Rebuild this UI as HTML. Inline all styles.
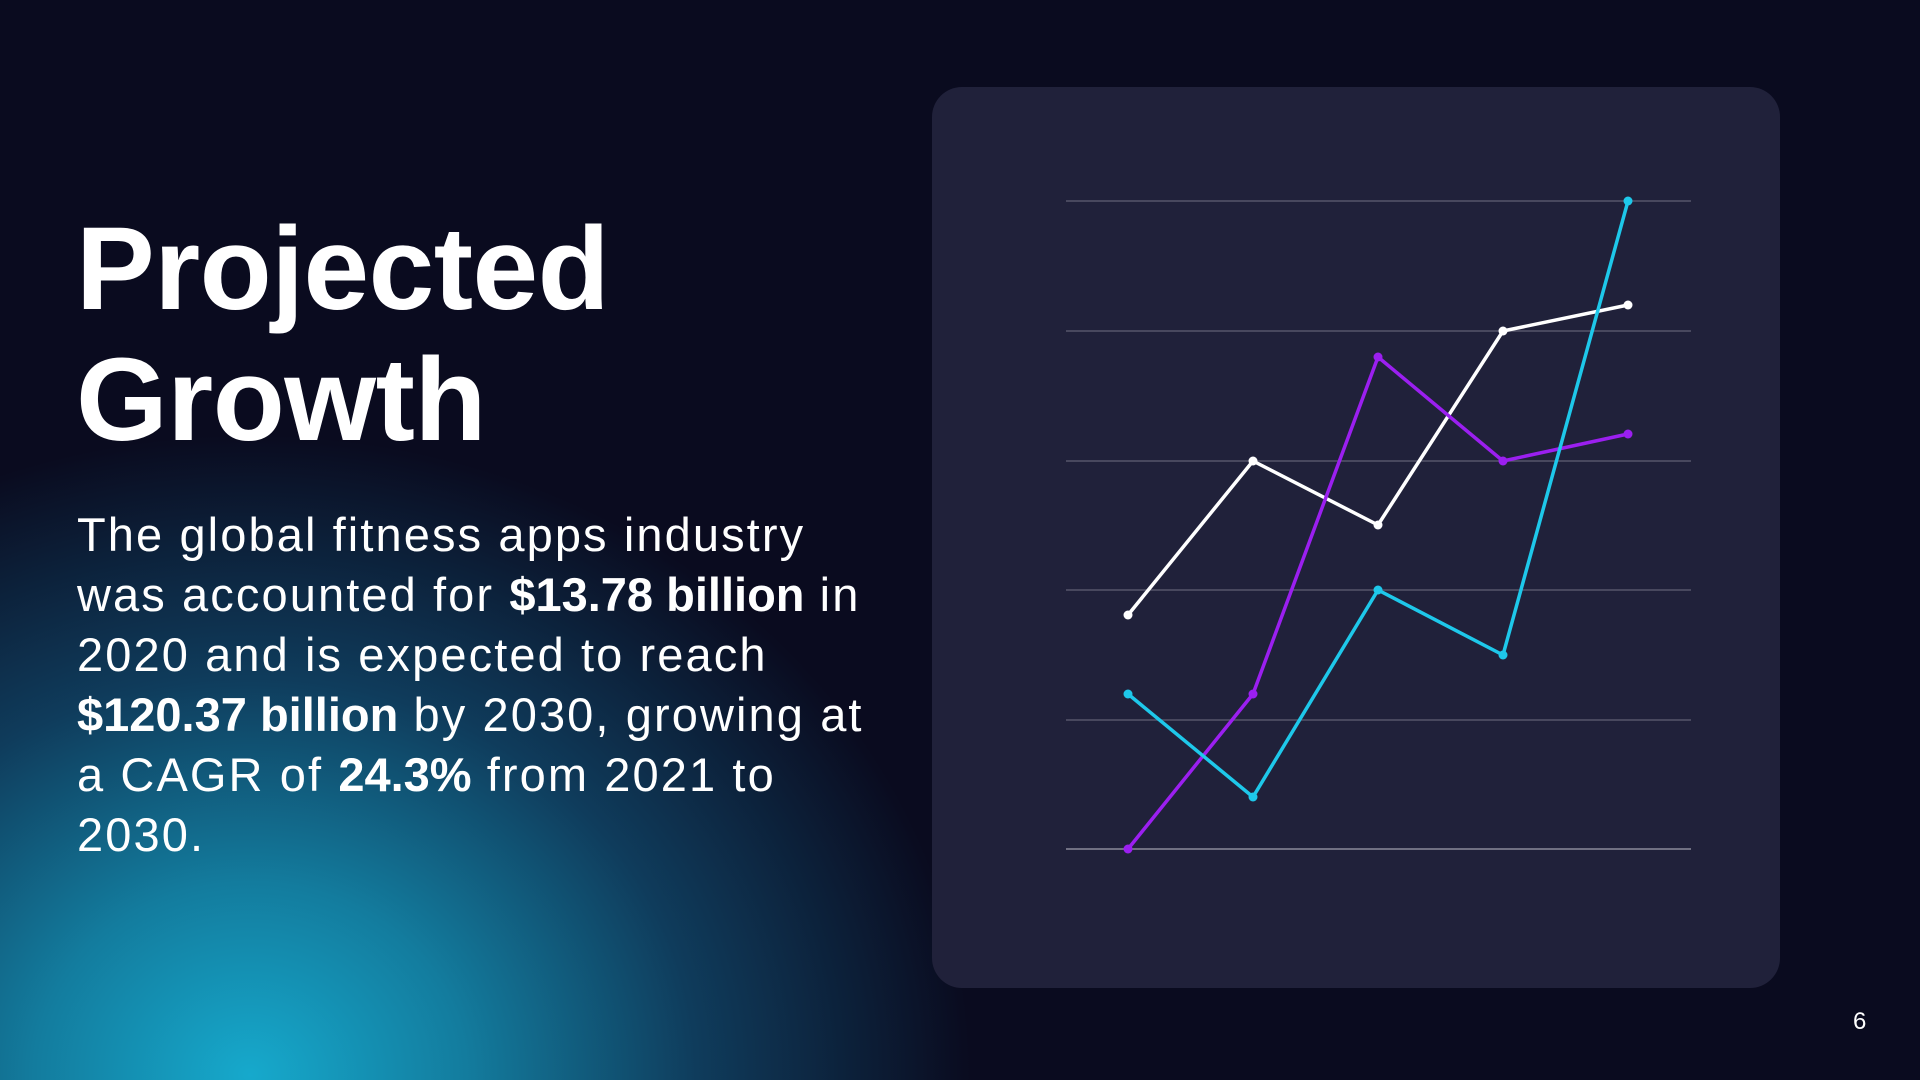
<!DOCTYPE html>
<html><head><meta charset="utf-8"><style>
html,body{margin:0;padding:0}
body{width:1920px;height:1080px;overflow:hidden;position:relative;background:#0a0b1f;font-family:"Liberation Sans",sans-serif;color:#fff}
.glow{position:absolute;left:0;top:0;width:1920px;height:1080px;background:radial-gradient(ellipse 720px 640px at 250px 1075px,#16a9cc 0%,#137c9e 30%,#0f3c5c 62%,rgba(10,11,31,0) 100%)}
h1{position:absolute;left:76px;top:204px;margin:0;font-size:118px;line-height:131px;font-weight:bold;letter-spacing:-0.5px}
p{position:absolute;left:77px;top:505px;margin:0;font-size:47px;line-height:60px;font-weight:normal;letter-spacing:2.1px}
b{font-weight:bold;letter-spacing:0}
.card{position:absolute;left:932px;top:87px;width:848px;height:901px;border-radius:30px;background:#20213a}
.num{position:absolute;left:1853px;top:1008px;font-size:24px}
</style></head><body>
<div class="glow"></div>
<h1>Projected<br>Growth</h1>
<p>The global fitness apps industry<br>was accounted for <b>$13.78 billion</b> in<br>2020 and is expected to reach<br><b>$120.37 billion</b> by 2030, growing at<br>a CAGR of <b>24.3%</b> from 2021 to<br>2030.</p>
<div class="card"></div>
<svg width="1920" height="1080" style="position:absolute;left:0;top:0">
<g stroke="#55566a" stroke-width="1.5">
<line x1="1066" y1="201" x2="1691" y2="201"/>
<line x1="1066" y1="331" x2="1691" y2="331"/>
<line x1="1066" y1="461" x2="1691" y2="461"/>
<line x1="1066" y1="590" x2="1691" y2="590"/>
<line x1="1066" y1="720" x2="1691" y2="720"/>
<line x1="1066" y1="849" x2="1691" y2="849" stroke="#8a8b9a"/>
</g>
<g fill="none" stroke-width="3.5" stroke-linejoin="round">
<polyline stroke="#ffffff" points="1128,615 1253,461 1378,525 1503,331 1628,305"/>
<polyline stroke="#9b1ff0" points="1128,849 1253,694 1378,357 1503,461 1628,434"/>
<polyline stroke="#1ec8ea" points="1128,694 1253,797 1378,590 1503,655 1628,201"/>
</g>
<g fill="#ffffff"><circle cx="1128" cy="615" r="4.5"/><circle cx="1253" cy="461" r="4.5"/><circle cx="1378" cy="525" r="4.5"/><circle cx="1503" cy="331" r="4.5"/><circle cx="1628" cy="305" r="4.5"/></g>
<g fill="#9b1ff0"><circle cx="1128" cy="849" r="4.5"/><circle cx="1253" cy="694" r="4.5"/><circle cx="1378" cy="357" r="4.5"/><circle cx="1503" cy="461" r="4.5"/><circle cx="1628" cy="434" r="4.5"/></g>
<g fill="#1ec8ea"><circle cx="1128" cy="694" r="4.5"/><circle cx="1253" cy="797" r="4.5"/><circle cx="1378" cy="590" r="4.5"/><circle cx="1503" cy="655" r="4.5"/><circle cx="1628" cy="201" r="4.5"/></g>
</svg>
<div class="num">6</div>
</body></html>
